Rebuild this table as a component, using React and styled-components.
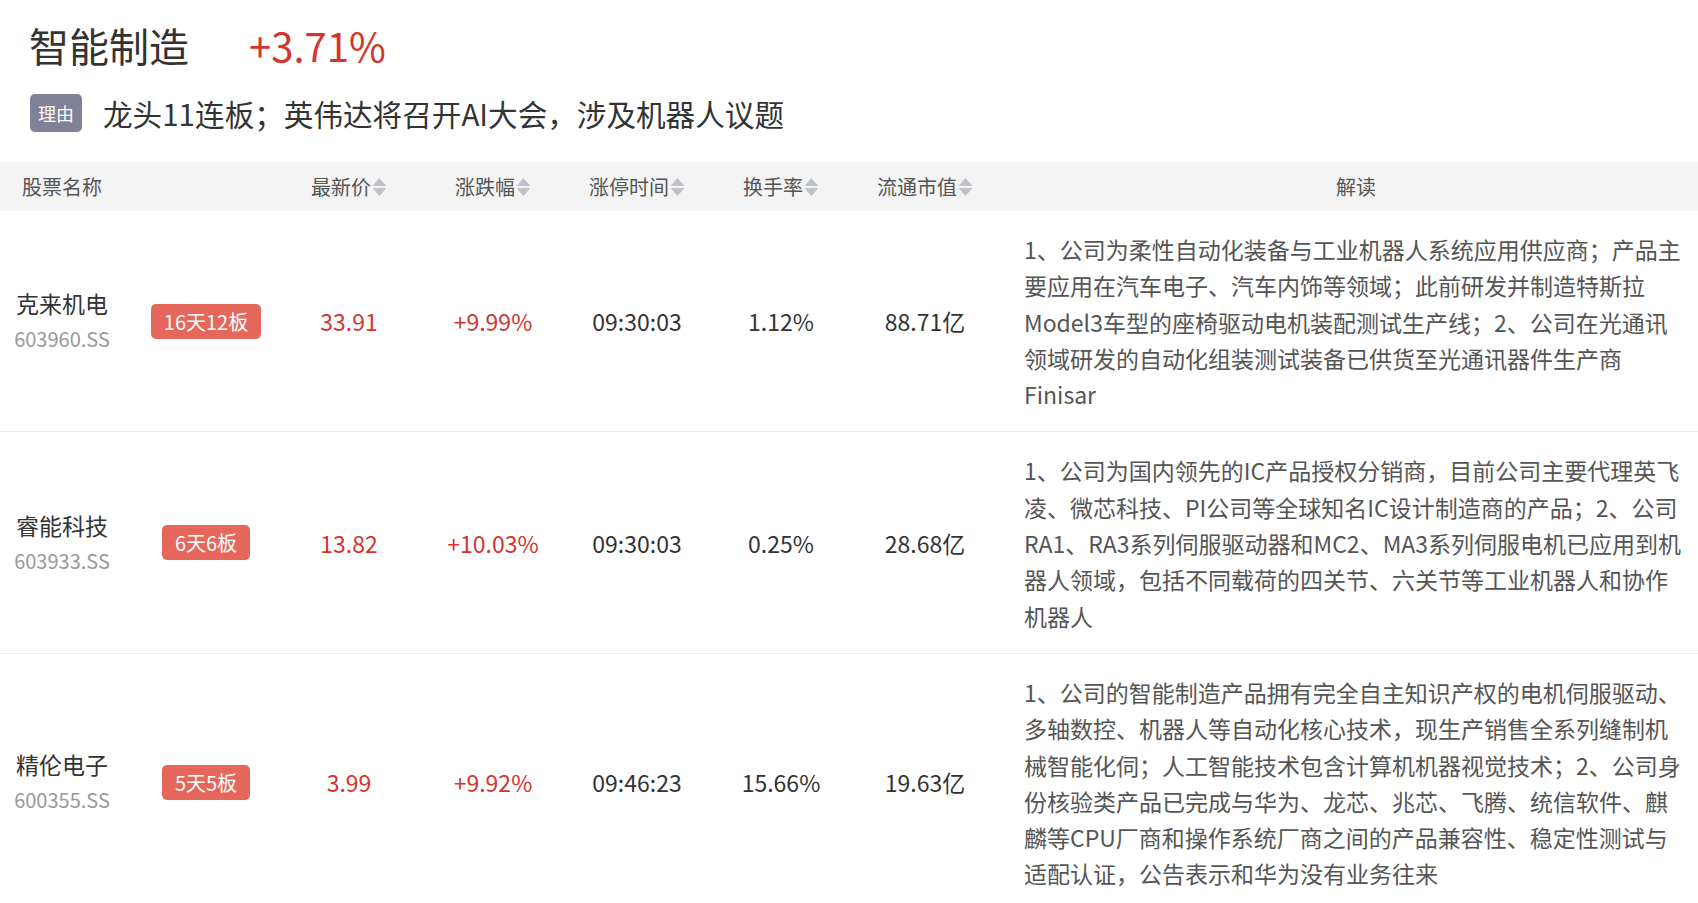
import styled, { createGlobalStyle } from 'styled-components'

const GlobalStyle = createGlobalStyle`
  body {
    margin: 0;
    background: #ffffff;
    font-family: "Noto Sans CJK SC", "Noto Sans", sans-serif;
    color: #333333;
  }
`

const COLS = '124px 164px 122px 166px 122px 166px 122px 1fr'

const Page = styled.div`
  width: 1698px;
  overflow: hidden;
`

const TitleRow = styled.div`
  display: flex;
  align-items: center;
  padding: 17px 0 0 29px;
  height: 56px;
`

const Title = styled.h1`
  margin: 0;
  font-size: 40px;
  font-weight: 400;
  color: #333333;
  line-height: 56px;
`

const Change = styled.span`
  margin-left: 60px;
  font-size: 40px;
  line-height: 56px;
  color: #d3352c;
`

const ReasonRow = styled.div`
  display: flex;
  align-items: center;
  gap: 21px;
  padding-left: 30px;
  margin-top: 20px;
  height: 40px;
`

const ReasonTag = styled.span`
  display: inline-flex;
  align-items: center;
  justify-content: center;
  width: 52px;
  height: 38px;
  border-radius: 5px;
  background: #7f8296;
  color: #ffffff;
  font-size: 18px;
`

const ReasonText = styled.span`
  font-size: 29.6px;
  color: #333333;
`

const Table = styled.div`
  margin-top: 29px;
`

const HeadRow = styled.div`
  display: grid;
  grid-template-columns: ${COLS};
  height: 49px;
  background: #f4f4f4;
  align-items: center;
`

const HeadCell = styled.div`
  display: flex;
  align-items: center;
  justify-content: center;
  font-size: 20px;
  color: #555555;
  padding: ${({ $desc }) => ($desc ? '0 10px 0 38px' : '0')};
`

const SortIcon = styled.svg`
  width: 15px;
  height: 22px;
  margin-left: 1px;
`

const Row = styled.div`
  display: grid;
  grid-template-columns: ${COLS};
  align-items: center;
  border-bottom: 1px solid #ebebeb;
`

const Cell = styled.div`
  display: flex;
  flex-direction: column;
  align-items: center;
  justify-content: center;
  font-size: 23px;
  color: ${({ $red }) => ($red ? '#d3352c' : '#333333')};
`

const StockName = styled.div`
  font-size: 23px;
  line-height: 36px;
  color: #333333;
`

const StockCode = styled.div`
  font-size: 20px;
  line-height: 36px;
  color: #999999;
`

const Badge = styled.span`
  display: inline-flex;
  align-items: center;
  height: 35px;
  padding: 0 13px;
  border-radius: 5px;
  background: #e5665a;
  color: #ffffff;
  font-size: 20px;
`

const Desc = styled.div`
  padding: 20px 10px 19px 38px;
  font-size: 23px;
  line-height: 36.3px;
  color: #555555;
`

const columns = [
  { label: '股票名称' },
  { label: '' },
  { label: '最新价', sort: true },
  { label: '涨跌幅', sort: true },
  { label: '涨停时间', sort: true },
  { label: '换手率', sort: true },
  { label: '流通市值', sort: true },
  { label: '解读', desc: true },
]

const stocks = [
  {
    name: '克来机电',
    code: '603960.SS',
    badge: '16天12板',
    price: '33.91',
    change: '+9.99%',
    time: '09:30:03',
    turnover: '1.12%',
    cap: '88.71亿',
    desc: '1、公司为柔性自动化装备与工业机器人系统应用供应商；产品主要应用在汽车电子、汽车内饰等领域；此前研发并制造特斯拉Model3车型的座椅驱动电机装配测试生产线；2、公司在光通讯领域研发的自动化组装测试装备已供货至光通讯器件生产商Finisar',
  },
  {
    name: '睿能科技',
    code: '603933.SS',
    badge: '6天6板',
    price: '13.82',
    change: '+10.03%',
    time: '09:30:03',
    turnover: '0.25%',
    cap: '28.68亿',
    desc: '1、公司为国内领先的IC产品授权分销商，目前公司主要代理英飞凌、微芯科技、PI公司等全球知名IC设计制造商的产品；2、公司RA1、RA3系列伺服驱动器和MC2、MA3系列伺服电机已应用到机器人领域，包括不同载荷的四关节、六关节等工业机器人和协作机器人',
  },
  {
    name: '精伦电子',
    code: '600355.SS',
    badge: '5天5板',
    price: '3.99',
    change: '+9.92%',
    time: '09:46:23',
    turnover: '15.66%',
    cap: '19.63亿',
    desc: '1、公司的智能制造产品拥有完全自主知识产权的电机伺服驱动、多轴数控、机器人等自动化核心技术，现生产销售全系列缝制机械智能化伺；人工智能技术包含计算机机器视觉技术；2、公司身份核验类产品已完成与华为、龙芯、兆芯、飞腾、统信软件、麒麟等CPU厂商和操作系统厂商之间的产品兼容性、稳定性测试与适配认证，公告表示和华为没有业务往来',
  },
]

function Sort() {
  return (
    <SortIcon viewBox="0 0 15 22">
      <path d="M7.5 2 L14.5 10 L0.5 10 Z" fill="#c0c2c8" />
      <path d="M0.5 12 L14.5 12 L7.5 20 Z" fill="#c0c2c8" />
    </SortIcon>
  )
}

function App() {
  return (
    <Page>
      <GlobalStyle />
      <TitleRow>
        <Title>智能制造</Title>
        <Change>+3.71%</Change>
      </TitleRow>
      <ReasonRow>
        <ReasonTag>理由</ReasonTag>
        <ReasonText>龙头11连板；英伟达将召开AI大会，涉及机器人议题</ReasonText>
      </ReasonRow>
      <Table>
        <HeadRow>
          {columns.map((c, i) => (
            <HeadCell key={i} $desc={c.desc}>
              {c.label}
              {c.sort && <Sort />}
            </HeadCell>
          ))}
        </HeadRow>
        {stocks.map((s) => (
          <Row key={s.code}>
            <Cell>
              <StockName>{s.name}</StockName>
              <StockCode>{s.code}</StockCode>
            </Cell>
            <Cell>
              <Badge>{s.badge}</Badge>
            </Cell>
            <Cell $red>{s.price}</Cell>
            <Cell $red>{s.change}</Cell>
            <Cell>{s.time}</Cell>
            <Cell>{s.turnover}</Cell>
            <Cell>{s.cap}</Cell>
            <Desc>{s.desc}</Desc>
          </Row>
        ))}
      </Table>
    </Page>
  )
}

export default App
